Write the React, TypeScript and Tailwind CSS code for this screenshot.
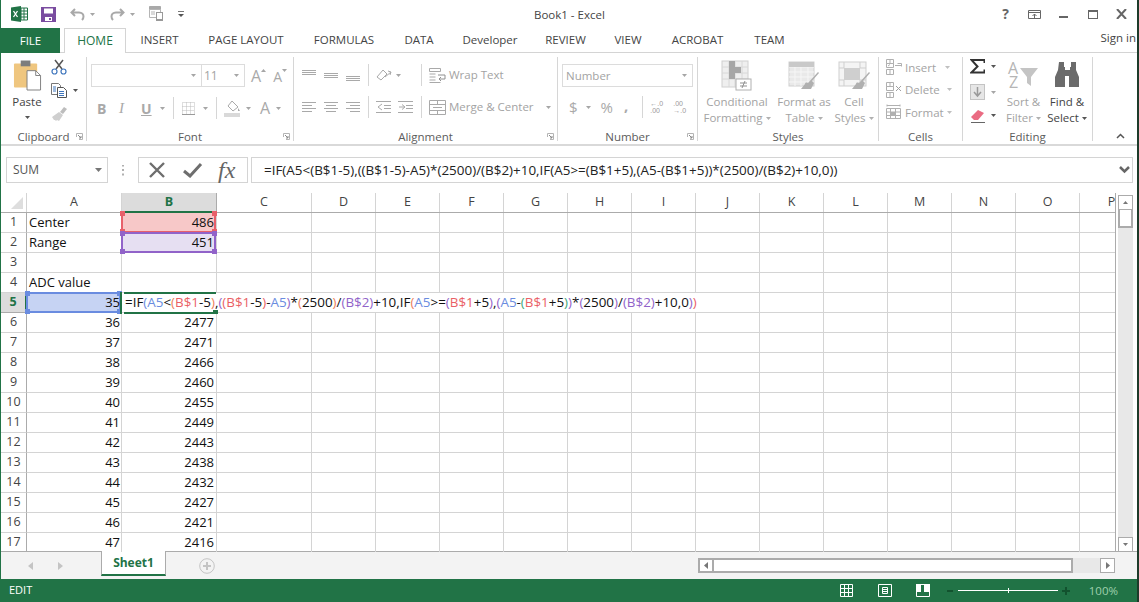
import React from "react";

const UI = "font-['Open_Sans','Noto_Sans',sans-serif]";
const Caret = ({ c = "#a6a6a6", cl = "" }: { c?: string; cl?: string }) => (
  <svg width="5" height="3" viewBox="0 0 5 3" className={"shrink-0 " + cl}><path d="M0 0h5L2.5 3z" fill={c} /></svg>
);
const Launcher = () => (
  <svg width="7" height="7" viewBox="0 0 7 7" className="absolute right-[3px] bottom-[1px]">
    <path d="M.5 4V.5h6M6.5 .5V6.5H3" fill="none" stroke="#b4b4b4" />
    <path d="M2 2l3 3M5 3v2H3" fill="none" stroke="#8a8a8a" />
  </svg>
);
const Group = ({ w, label, launcher, children }: { w: string; label?: string; launcher?: boolean; children: React.ReactNode }) => (
  <div className={w + " relative h-[84px] shrink-0 border-r border-[#d6d6d6] flex flex-col"}>
    <div className="h-[72px] shrink-0">{children}</div>
    <div className="flex-1 pt-[2px] flex items-center justify-center text-[11.5px] leading-none text-[#5c5c5c]">{label}</div>
    {launcher && <Launcher />}
  </div>
);
const Divider = ({ cl = "" }: { cl?: string }) => <div className={"w-px h-[22px] bg-[#d6d6d6] shrink-0 " + cl} />;

const Lines = ({ kind }: { kind: "top" | "mid" | "bot" | "l" | "c" | "r" }) => {
  const y = kind === "top" ? [1, 3, 5] : kind === "mid" ? [4, 6, 8] : kind === "bot" ? [7, 9, 11] : [1, 4, 7, 10];
  return (
    <svg width="14" height="12" viewBox="0 0 14 12" className="shrink-0">
      {y.map((v, i) => {
        const short = i % 2 === 1 && y.length === 4;
        const x1 = kind === "c" && short ? 2 : kind === "r" && short ? 4 : 0;
        const x2 = kind === "c" && short ? 12 : kind === "l" && short ? 10 : 14;
        return <path key={v} d={`M${x1} ${v}.5H${x2}`} stroke="#a9a9a9" />;
      })}
    </svg>
  );
};

const SmallCellIcon = ({ k }: { k: "ins" | "del" | "fmt" }) => (
  <svg width="17" height="16" viewBox="0 0 17 16" className="shrink-0" fill="none" stroke="#b0b0b0">
    {k === "fmt" ? (
      <>
        <path d="M1.500 4.500h14v10h-14zM1.500 8h14M1.500 11.500h14M5.500 4.500v10M10.500 4.500v10" />
        <path d="M2 1.500h13M2 .5v2M15 .5v2" />
        <path d="M6 8.500h4v3H6z" fill="#b0b0b0" />
      </>
    ) : (
      <>
        <path d="M1.500 .5h7v4h-7zM1.500 4.500h7v4h-7zM1.500 10.500h7v5h-7zM5 .5v4M5 10.500v5" />
        {k === "ins" ? <path d="M10 6.500h6.500M3 7l2-1.500M12.500 4.500h4v3" /> : <path d="M11 4l5 5M16 4l-5 5" stroke="#a0a0a0" />}
      </>
    )}
  </svg>
);

const StyleIcon = ({ k }: { k: "cond" | "table" | "cell" }) => (
  <svg width="32" height="32" viewBox="0 0 32 32" className="shrink-0">
    {k === "cond" && (
      <>
        <rect x="1" y="1" width="26" height="26" fill="#efefef" stroke="#d0d0d0" />
        <path d="M1 7h26M1 13h26M1 19h26M8 1v26M14 1v26M21 1v26" stroke="#d8d8d8" />
        <path d="M8 1h6v6h6v6h-6v6H8z" fill="#a6a6a6" />
        <rect x="15" y="19" width="15" height="11" fill="#fff" stroke="#b0b0b0" />
        <path d="M19 23h7M19 26h7M24 21l-3 7" stroke="#8f8f8f" fill="none" />
      </>
    )}
    {k === "table" && (
      <>
        <rect x="1" y="2" width="25" height="24" fill="#e9e9e9" stroke="#cfcfcf" />
        <path d="M1 7h25M1 12h25M1 17h25M1 22h25M7 2v24M13 2v24M20 2v24" stroke="#f6f6f6" />
        <path d="M1 2h25v5H1z" fill="#c9c9c9" />
        <path d="M30 12L20 23c-2-1-3 0-3 1l-4 5h10l3-6-2-2 7-8z" fill="#b0b0b0" />
      </>
    )}
    {k === "cell" && (
      <>
        <rect x="1" y="2" width="27" height="24" fill="#f4f4f4" stroke="#cfcfcf" />
        <path d="M1 8h5M1 20h5M22 8h6M22 20h6M6 2v6M22 2v6M6 20v6M22 20v6" stroke="#cfcfcf" />
        <rect x="6" y="8" width="16" height="12" fill="#cfcfcf" />
        <path d="M31 12L21 23c-2-1-3 0-3 1l-4 5h10l3-6-2-2 7-8z" fill="#b0b0b0" />
      </>
    )}
  </svg>
);

const LabeledBtn = ({ w, icon, l1, l2, caret, dark }: { w: string; icon: React.ReactNode; l1: string; l2: string; caret?: boolean; dark?: boolean }) => (
  <div className={w + " shrink-0 flex flex-col items-center pt-[3px] leading-none " + (dark ? "text-[#444]" : "text-[#a3a3a3]")}>
    <div className="h-[33px] flex items-start justify-center">{icon}</div>
    <div className="text-[11.5px] h-[16px] mt-[1px] whitespace-nowrap leading-[16px]">{l1}</div>
    <div className="text-[11.5px] h-[16px] whitespace-nowrap leading-[16px] flex items-center gap-[3px]">
      {l2}
      {caret && <Caret c={dark ? "#555" : "#b0b0b0"} />}
    </div>
  </div>
);

const CellRow = ({ k, t, gap }: { k: "ins" | "del" | "fmt"; t: string; gap: string }) => (
  <div className="h-[22.5px] flex items-center pl-[6px] text-[11.5px] text-[#a3a3a3]">
    <SmallCellIcon k={k} />
    <span className="ml-[3px]">{t}</span>
    <Caret c="#c0c0c0" cl={gap} />
  </div>
);

const Ribbon = () => (
  <div className="h-[93px] shrink-0 border-b-2 border-[#d9d9d9] flex items-start pt-[4px] bg-white">
    <Group w="w-[86px]" label="Clipboard" launcher>
      <div className="flex">
        <div className="w-[44px] pl-[8px] flex flex-col items-center text-[#444]">
          <svg width="29" height="31" viewBox="0 0 30 31" className="mt-[3px] shrink-0">
            <rect x="1" y="3" width="24" height="25" rx="1" fill="#efc67f" />
            <rect x="8" y="0" width="10" height="6" fill="#7d7d7d" />
            <path d="M14.500 10.500h9l5 5v15h-14z" fill="#fff" stroke="#7f7f7f" />
            <path d="M23.500 10.500v5h5" fill="none" stroke="#7f7f7f" />
          </svg>
          <div className="text-[11.5px] leading-[16px] mt-[3px] whitespace-nowrap">Paste</div>
          <Caret c="#555" cl="mt-[6px]" />
        </div>
        <div className="flex flex-col ml-[6px] pt-[2px]">
          <svg width="16" height="16" viewBox="0 0 16 16">
            <path d="M4 1l7 9M12 1L5 10" stroke="#555" strokeWidth="1.500" fill="none" />
            <circle cx="3.500" cy="12.500" r="2.500" fill="none" stroke="#3f76bd" strokeWidth="1.200" />
            <circle cx="12.500" cy="12.500" r="2.500" fill="none" stroke="#3f76bd" strokeWidth="1.200" />
          </svg>
          <div className="flex items-center mt-[8px]">
            <svg width="16" height="15" viewBox="0 0 16 15">
              <path d="M.5.5h7l2 2v9H.5z" fill="#fff" stroke="#777" />
              <path d="M6.500 4.500h6l3 3v7h-9z" fill="#fff" stroke="#555" />
              <path d="M8 8.500h5M8 10.500h5M8 12.500h5M2 4h3M2 6h3M2 8h3" stroke="#3f76bd" />
            </svg>
            <Caret c="#555" cl="ml-[6px]" />
          </div>
          <svg width="17" height="15" viewBox="0 0 17 15" className="mt-[8px]">
            <path d="M9 6l4-5 3 2-4 5z" fill="#bdbdbd" />
            <path d="M1 11l7-5 4 3-4 6-2-1-1 1-1-1-1 0z" fill="#cfcfcf" />
          </svg>
        </div>
      </div>
    </Group>

    <Group w="w-[207px]" label="Font" launcher>
      <div className="flex pl-[4px] mt-[7px] h-[23px]">
        <div className="w-[111px] h-[23px] border border-[#dcdcdc] flex items-center justify-end pr-[5px]"><Caret /></div>
        <div className="w-[43px] h-[23px] border border-l-0 border-[#dcdcdc] flex items-center justify-between pl-[2px] pr-[5px] text-[12px] text-[#a3a3a3]">11<Caret /></div>
        <div className="ml-[6px] flex items-end text-[#a9a9a9] text-[16px] leading-[21px]">A<Caret cl="rotate-180 mb-[15px]" /></div>
        <div className="ml-[7px] flex items-end text-[#a9a9a9] text-[14px] leading-[21px]">A<Caret cl="mb-[15px]" /></div>
      </div>
      <div className="flex items-center pl-[10px] mt-[11px] h-[20px] text-[#a9a9a9]">
        <span className="w-[22px] text-[14px] font-bold">B</span>
        <span className="w-[22px] text-[15px] italic font-['Liberation_Serif',serif]">I</span>
        <span className="w-[19px] text-[14px] underline font-bold">U</span>
        <Caret />
        <Divider cl="ml-[8px]" />
        <svg width="13" height="13" viewBox="0 0 13 13" className="ml-[8px]">
          <path d="M.5 .5h12v12H.5zM.5 4.500h12M.5 8.500h12M4.500 .5v12M8.500 .5v12" fill="none" stroke="#bdbdbd" strokeDasharray="1 1" />
          <path d="M0 12.500h13" stroke="#9a9a9a" />
        </svg>
        <Caret cl="ml-[8px]" />
        <Divider cl="ml-[8px]" />
        <svg width="17" height="17" viewBox="0 0 17 17" className="ml-[7px]">
          <path d="M8 1l6 6-5 4-5-5z" fill="#fff" stroke="#a9a9a9" />
          <path d="M14 8l2 3h-2z" fill="#a9a9a9" />
          <rect x="0" y="13" width="16" height="4" fill="#d9d9d9" />
        </svg>
        <Caret cl="ml-[5px]" />
        <span className="ml-[9px] text-[16px] leading-none">A</span>
        <Caret cl="ml-[6px]" />
      </div>
    </Group>

    <Group w="w-[264px]" label="Alignment" launcher>
      <div className="flex items-center pl-[8px] mt-[6px] h-[24px]">
        <Lines kind="top" />
        <span className="ml-[8px]"><Lines kind="mid" /></span>
        <span className="ml-[8px]"><Lines kind="bot" /></span>
        <Divider cl="ml-[8px]" />
        <svg width="17" height="14" viewBox="0 0 17 14" className="ml-[7px]">
          <path d="M1 9l6-7 4 4-6 6zM9 9l6-5M12 3l3 1-1 3" fill="none" stroke="#a9a9a9" />
        </svg>
        <Caret cl="ml-[3px]" />
        <Divider cl="ml-[20px]" />
        <svg width="17" height="15" viewBox="0 0 17 15" className="ml-[7px]">
          <path d="M.5.5h11v3H.5zM.5 6h6M.5 9h6M.5 12h6M.5 14.500h11" fill="none" stroke="#a9a9a9" />
          <path d="M9 7h7v4h-5M12 9l-2 2 2 2" fill="none" stroke="#909090" />
        </svg>
        <span className="ml-[3px] text-[11.5px] text-[#a3a3a3]">Wrap Text</span>
      </div>
      <div className="flex items-center pl-[8px] mt-[8px] h-[24px]">
        <Lines kind="l" />
        <span className="ml-[8px]"><Lines kind="c" /></span>
        <span className="ml-[8px]"><Lines kind="r" /></span>
        <Divider cl="ml-[8px]" />
        <svg width="15" height="12" viewBox="0 0 15 12" className="ml-[7px]">
          <path d="M0 .5h15M8 4.500h7M8 7.500h7M0 11.500h15M6 3L2 6l4 3" fill="none" stroke="#a9a9a9" />
        </svg>
        <svg width="15" height="12" viewBox="0 0 15 12" className="ml-[7px]">
          <path d="M0 .5h15M8 4.500h7M8 7.500h7M0 11.500h15M1 6h5M4 3.500L7 6 4 8.500" fill="none" stroke="#a9a9a9" />
        </svg>
        <Divider cl="ml-[8px]" />
        <svg width="17" height="15" viewBox="0 0 17 15" className="ml-[7px]">
          <path d="M.5.5h16v14H.5zM.5 4.500h16M.5 10.500h16M8.500 .5v4M8.500 10.500v4M4 7.500h9" fill="none" stroke="#a9a9a9" />
        </svg>
        <span className="ml-[3px] text-[11.5px] text-[#a3a3a3] whitespace-nowrap">Merge &amp; Center</span>
        <Caret cl="ml-[12px]" />
      </div>
    </Group>

    <Group w="w-[140px]" label="Number" launcher>
      <div className="ml-[4px] mt-[7px] w-[131px] h-[23px] border border-[#dcdcdc] flex items-center justify-between pl-[3px] pr-[5px] text-[11.5px] text-[#a3a3a3]">Number<Caret /></div>
      <div className="flex items-center pl-[11px] mt-[8px] h-[24px] text-[#a9a9a9]">
        <span className="text-[15px] leading-none">$</span>
        <Caret cl="ml-[8px]" />
        <span className="text-[15px] leading-none ml-[10px]">%</span>
        <span className="text-[15px] leading-none font-bold ml-[11px] mb-[3px]">,</span>
        <Divider cl="ml-[14px]" />
        <span className="ml-[7px] w-[17px] text-[7px] leading-[7px] text-[#999] font-['Liberation_Sans',sans-serif]">←.0<br />.00</span>
        <span className="ml-[6px] w-[17px] text-[7px] leading-[7px] text-[#999] font-['Liberation_Sans',sans-serif]">.00<br />→.0</span>
      </div>
    </Group>

    <Group w="w-[181px]" label="Styles">
      <div className="flex">
        <LabeledBtn w="w-[76px] ml-[1px]" icon={<StyleIcon k="cond" />} l1="Conditional" l2="Formatting" caret />
        <LabeledBtn w="w-[58px]" icon={<StyleIcon k="table" />} l1="Format as" l2="Table" caret />
        <LabeledBtn w="w-[42px]" icon={<StyleIcon k="cell" />} l1="Cell" l2="Styles" caret />
      </div>
    </Group>

    <Group w="w-[84px]" label="Cells">
      <div className="-mt-px">
        <CellRow k="ins" t="Insert" gap="ml-[9px]" />
        <CellRow k="del" t="Delete" gap="ml-[7px]" />
        <CellRow k="fmt" t="Format" gap="ml-[3px]" />
      </div>
    </Group>

    <Group w="w-[130px]" label="Editing">
      <div className="flex">
        <div className="flex flex-col pl-[7px] w-[40px]">
          <div className="flex items-center h-[23px] pb-[4px]">
            <svg width="15" height="15" viewBox="0 0 15 15"><path d="M14.500 4V1H1.500l6 6.500-6 6h13v-3" fill="none" stroke="#333" strokeWidth="2" /></svg>
            <Caret c="#555" cl="ml-[6px]" />
          </div>
          <div className="flex items-center h-[24px]">
            <svg width="15" height="16" viewBox="0 0 15 16"><rect x=".5" y=".5" width="14" height="15" fill="#e6e6e6" stroke="#c4c4c4" /><path d="M7.500 3v8M4 8l3.500 4L11 8" fill="none" stroke="#9a9a9a" strokeWidth="1.500" /></svg>
            <Caret cl="ml-[6px]" />
          </div>
          <div className="flex items-center h-[23px]">
            <svg width="16" height="14" viewBox="0 0 16 14"><path d="M1 8l7-7 6 3-6 7H4z" fill="#ea6b82" /><path d="M1 13.500h14" stroke="#666" /></svg>
            <Caret c="#555" cl="ml-[5px]" />
          </div>
        </div>
        <LabeledBtn w="w-[41px]" icon={
          <svg width="32" height="30" viewBox="0 0 32 30" className="-ml-px">
            <text x="1" y="14" fontSize="16" fill="#b5b5b5" fontFamily="Open Sans">A</text>
            <text x="2" y="28" fontSize="16" fill="#b5b5b5" fontFamily="Open Sans">Z</text>
            <path d="M13 8h18l-7 9v9l-4-3v-6z" fill="#c4c4c4" />
          </svg>} l1="Sort &amp;" l2="Filter" caret />
        <LabeledBtn w="w-[46px]" dark icon={
          <svg width="27" height="25" viewBox="0 0 27 25" className="mt-[2px]">
            <path d="M5 0h5v5h1v3h5V5h1V0h5v8l3 7v10h-10V14h-4v11H1V15l3-7z" fill="#6b6b6b" />
          </svg>} l1="Find &amp;" l2="Select" caret />
      </div>
    </Group>
    <div className="flex-1 h-[84px] flex items-end justify-end pr-[12px] pb-[2px]">
      <svg width="9" height="6" viewBox="0 0 9 6"><path d="M1 5l3.500-3.500L8 5" fill="none" stroke="#555" strokeWidth="1.500" /></svg>
    </div>
  </div>
);

const TABS: [string, string][] = [
  ["INSERT", "w-[67px]"], ["PAGE LAYOUT", "w-[106px]"], ["FORMULAS", "w-[90px]"], ["DATA", "w-[60px]"],
  ["Developer", "w-[82px]"], ["REVIEW", "w-[69px]"], ["VIEW", "w-[56px]"], ["ACROBAT", "w-[83px]"], ["TEAM", "w-[61px]"],
];

const TitleBar = () => (
  <div className="h-[28px] shrink-0 flex items-center relative">
    <div className="flex items-center pl-[10px]">
      <svg width="17" height="16" viewBox="0 0 17 16">
        <path d="M0 1.500L10 0v16L0 14.500z" fill="#217346" />
        <path d="M10 2h6.500v12H10z" fill="#fff" stroke="#217346" />
        <path d="M10 5h6M10 8h6M10 11h6M13 2v12" stroke="#217346" />
        <path d="M2.500 5l4 6M6.500 5l-4 6" stroke="#fff" strokeWidth="1.300" />
      </svg>
      <svg width="15" height="15" viewBox="0 0 15 15" className="ml-[13px]">
        <path d="M.5 .5h14v14H.5z" fill="#fff" stroke="#7a4ca0" />
        <path d="M0 0h15v15H0zM3 1.500v5h9v-5zM4 10v4h7v-4z" fill="#7a4ca0" fillRule="evenodd" />
        <rect x="8" y="11" width="2" height="2" fill="#7a4ca0" />
      </svg>
      <svg width="15" height="13" viewBox="0 0 15 13" className="ml-[14px]"><path d="M5 1L1.500 4.500 5 8M2 4.500h7c3 0 4.500 2 4.500 4 0 1.500-.5 2.500-1.500 3.500" fill="none" stroke="#a9a9a9" strokeWidth="2" /></svg>
      <Caret cl="ml-[5px]" />
      <svg width="15" height="13" viewBox="0 0 15 13" className="ml-[15px] -scale-x-100"><path d="M5 1L1.500 4.500 5 8M2 4.500h7c3 0 4.500 2 4.500 4 0 1.500-.5 2.500-1.500 3.500" fill="none" stroke="#a9a9a9" strokeWidth="2" /></svg>
      <Caret cl="ml-[5px]" />
      <svg width="16" height="16" viewBox="0 0 16 16" className="ml-[14px]">
        <path d="M.5 .5h11v3H.5z" fill="#a9a9a9" stroke="#a9a9a9" />
        <path d="M.5 3.500h11v8H.5z" fill="#fff" stroke="#b5b5b5" />
        <path d="M2 6h4M2 8h4" stroke="#b5b5b5" />
        <rect x="7.500" y="6.500" width="6" height="8" fill="#fff" stroke="#999" />
        <path d="M8 13h5v2H8z" fill="#999" />
      </svg>
      <svg width="6" height="6" viewBox="0 0 6 6" className="ml-[13px]"><path d="M0 .5h6" stroke="#777" /><path d="M0 3h6L3 6z" fill="#555" /></svg>
    </div>
    <div className="absolute left-[533px] top-[6px] text-[11.5px] leading-[18px] text-[#444] whitespace-nowrap">Book1 - Excel</div>
    <div className="ml-auto flex items-center pr-[10px] text-[#666]">
      <span className="font-bold text-[14px] leading-none">?</span>
      <svg width="13" height="9" viewBox="0 0 13 9" className="ml-[19px]"><path d="M.5 .5h12v8H.5zM.5 2.500h12M6.500 8V4M4.500 6l2-2 2 2" fill="none" stroke="#666" /></svg>
      <div className="w-[9px] h-[2px] bg-[#666] ml-[18px] mt-[5px]" />
      <div className="w-[10px] h-[9px] border border-t-2 border-[#666] ml-[20px]" />
      <svg width="11" height="10" viewBox="0 0 11 10" className="ml-[18px]"><path d="M1 0l9 10M10 0L1 10" stroke="#666" strokeWidth="2" /></svg>
    </div>
  </div>
);

const TabBar = () => (
  <div className="h-[25px] shrink-0 flex items-stretch relative border-b border-[#d4d4d4]">
    <div className="w-[59px] -mb-px bg-[#217346] text-white text-[11.5px] flex items-center justify-center">FILE</div>
    <div className="w-[62px] ml-[4px] -mb-px bg-white border border-b-0 border-[#d4d4d4] text-[#217346] text-[12px] flex items-center justify-center">HOME</div>
    {TABS.map(([t, w]) => (
      <div key={t} className={w + " shrink-0 flex items-center justify-center text-[11.5px] text-[#444] whitespace-nowrap"}>{t}</div>
    ))}
    <div className="ml-auto pr-[1px] text-[11.5px] text-[#444] leading-[20px] whitespace-nowrap">Sign in</div>
  </div>
);

const FormulaBar = () => (
  <div className="h-[26px] mt-[11px] shrink-0 flex items-stretch pl-[5px]">
    <div className="w-[102px] border border-[#d4d4d4] flex items-center justify-between pl-[6px] pr-[5px] text-[12px] text-[#555]">SUM<svg width="7" height="4" viewBox="0 0 7 4"><path d="M0 0h7L3.500 4z" fill="#777" /></svg></div>
    <div className="w-[30px] flex items-center justify-center"><svg width="2" height="11" viewBox="0 0 2 11"><path d="M0 .5h2M0 5h2M0 9.500h2" stroke="#b0b0b0" strokeWidth="2" /></svg></div>
    <div className="w-[110px] border border-[#d4d4d4] flex items-center pl-[10px]">
      <svg width="16" height="16" viewBox="0 0 16 16"><path d="M1 1l14 14M15 1L1 15" stroke="#6e6e6e" strokeWidth="2.400" /></svg>
      <svg width="20" height="16" viewBox="0 0 20 16" className="ml-[18px]"><path d="M1 9l6 5L18 2" fill="none" stroke="#6e6e6e" strokeWidth="3" /></svg>
      <span className="ml-[15px] w-[22px] text-[24px] leading-none italic text-[#666] font-['Liberation_Serif',serif]">fx</span>
    </div>
    <div className="w-[882px] ml-[3px] border border-[#d4d4d4] flex items-center justify-between pl-[12px] pr-[2px] text-[#222] text-[13.45px] font-['Open_Sans',sans-serif] whitespace-nowrap">
      <span>=IF(A5&lt;(B$1-5),((B$1-5)-A5)*(2500)/(B$2)+10,IF(A5&gt;=(B$1+5),(A5-(B$1+5))*(2500)/(B$2)+10,0))</span>
      <svg width="11" height="8" viewBox="0 0 11 8"><path d="M1 1l4.500 4.500L10 1" fill="none" stroke="#666" strokeWidth="2.500" /></svg>
    </div>
  </div>
);

const COLS: [string, string][] = [
  ["A", "w-[95px]"], ["B", "w-[95px]"], ["C", "w-[95px]"], ["D", "w-[64px]"], ["E", "w-[64px]"], ["F", "w-[64px]"], ["G", "w-[64px]"],
  ["H", "w-[64px]"], ["I", "w-[64px]"], ["J", "w-[64px]"], ["K", "w-[64px]"], ["L", "w-[64px]"], ["M", "w-[64px]"], ["N", "w-[64px]"], ["O", "w-[64px]"], ["P", "w-[64px]"],
];
const B_VALS = ["486", "451", "", "", "", "2477", "2471", "2466", "2460", "2455", "2449", "2443", "2438", "2432", "2427", "2421", "2416"];
const A_LEFT: Record<number, string> = { 1: "Center", 2: "Range", 4: "ADC value" };

const BL = "#6a8ce0", RD = "#ea5f66", PU = "#9163c9", OR = "#ed7d5a", GR = "#3fa877", K = "#111";
const F: [string, string][] = [
  ["=IF", K], ["(", BL], ["A5", BL], ["<", K], ["(", OR], ["B$1", RD], ["-5", K], [")", OR], [",", K], ["(", PU], ["(", RD], ["B$1", RD], ["-5", K], [")", RD], ["-", K], ["A5", BL], [")", PU], ["*", K], ["(", OR], ["2500", K], [")", OR], ["/", K], ["(", PU], ["B$2", PU], [")", PU],
  ["+10,IF", K], ["(", OR], ["A5", BL], [">=", K], ["(", PU], ["B$1", RD], ["+5", K], [")", PU], [",", K], ["(", PU], ["A5", BL], ["-", K], ["(", GR], ["B$1", RD], ["+5", K], [")", GR], [")", PU], ["*", K], ["(", PU], ["2500", K], [")", PU], ["/", K], ["(", PU], ["B$2", PU], [")", PU], ["+10,0", K], [")", PU], [")", RD],
];

const Ref = ({ color, cl, noTop }: { color: string; cl: string; noTop?: boolean }) => (
  <div className={"absolute pointer-events-none z-10 " + cl}>
    <div className={"absolute inset-0 border-2 " + (noTop ? "border-t-0" : "")} style={{ borderColor: color }} />
    {["-top-[1px] -left-[1px]", "-top-[1px] -right-[1px]", "-bottom-[1px] -left-[1px]", "-bottom-[1px] -right-[1px]"].map((p) => (
      <div key={p} className={"absolute w-[5px] h-[5px] " + p} style={{ background: color }} />
    ))}
  </div>
);

const Grid = () => (
  <div className="h-[359px] mt-[10px] shrink-0 flex items-stretch overflow-hidden">
    <div className="w-[1114px] shrink-0 overflow-hidden text-[13px] font-['Open_Sans',sans-serif] text-[#111]">
      <div className="flex h-[20px] border-b border-[#ababab] text-[#444] text-[12.5px]">
        <div className="w-[26px] h-[19px] shrink-0 border-r border-[#d4d4d4] flex items-end justify-end">
          <svg width="12" height="12" viewBox="0 0 12 12" className="mr-[3px] mb-[3px]"><path d="M12 0v12H0z" fill="#dedede" /></svg>
        </div>
        {COLS.map(([c, w], i) => (
          <div key={c} className={w + " h-[19px] shrink-0 flex items-center justify-center border-r " + (i === 1 ? "bg-[#dcdcdc] border-[#ababab] font-bold text-[#217346] border-b-2 border-b-[#217346] !h-[20px]" : "border-[#d4d4d4]")}>{c}</div>
        ))}
      </div>
      {B_VALS.map((b, r) => {
        const row = r + 1;
        return (
          <div key={row} className="flex h-[20px]">
            <div className={"w-[26px] shrink-0 border-b border-r flex items-center justify-center text-[12.5px] " + (row === 5 ? "bg-[#dcdcdc] text-[#217346] font-bold border-r-2 border-r-[#217346] border-b-[#ababab]" : "border-[#ababab] border-b-[#d4d4d4] text-[#444]")}>{row}</div>
            {COLS.map(([c, w], i) => (
              <div key={c} className={w + " relative shrink-0 border-b border-r border-[#d4d4d4] leading-[19px] whitespace-nowrap"}>
                {i === 0 && A_LEFT[row] && <div className="pl-[2px]">{A_LEFT[row]}</div>}
                {i === 0 && row >= 5 && (
                  <div className={"text-right pr-[1px] " + (row === 5 ? "relative z-20" : "")}>{row + 30}</div>
                )}
                {i === 0 && row === 5 && (
                  <>
                    <div className="absolute inset-0 bg-[#c6d3f3]" />
                    <Ref color="#6a8ce0" cl="-left-[1px] -top-[1px] -right-[0px] -bottom-[1px]" />
                  </>
                )}
                {i === 1 && row === 1 && (
                  <>
                    <div className="absolute inset-0 bg-[#f7c8c8]" />
                    <Ref color="#e8606a" noTop cl="-left-[1px] -top-[1px] right-0 -bottom-[1px]" />
                  </>
                )}
                {i === 1 && row === 2 && (
                  <>
                    <div className="absolute inset-0 bg-[#e6dff2]" />
                    <Ref color="#9163c9" cl="-left-[1px] -top-[1px] right-0 -bottom-[1px]" />
                  </>
                )}
                {i === 1 && b && <div className="relative z-20 text-right pr-[2px]">{b}</div>}
                {i === 1 && row === 5 && (
                  <>
                    <div className="absolute z-30 left-[2px] top-0 h-[19px] bg-white pl-px pr-[2px] text-[13.4px] text-[#111] leading-[19px]">
                      {F.map(([t, col], k) => <span key={k} style={{ color: col }}>{t}</span>)}
                    </div>
                    <div className="absolute z-40 -left-[2px] -top-[1px] w-[2px] h-[22px] bg-[#217346]" />
                    <div className="absolute z-40 left-[2px] -top-[1px] right-0 h-[2px] bg-[#217346]" />
                    <div className="absolute z-40 left-[2px] -bottom-[2px] right-0 h-[2px] bg-[#217346]" />
                    <div className="absolute z-40 -right-[2px] -bottom-[2px] w-[5px] h-[4px] bg-[#217346]" />
                  </>
                )}
              </div>
            ))}
          </div>
        );
      })}
    </div>
    <div className="border-l border-[#ababab] h-[359px] shrink-0" />
    <div className="flex-1 flex flex-col items-center pl-[2px] pr-[4px] pt-[2px] bg-white">
      <div className="w-[15px] h-[15px] border border-[#ababab] flex items-center justify-center"><Caret c="#777" cl="rotate-180" /></div>
      <div className="w-[15px] h-[18px] border-2 border-t-0 border-[#ababab] bg-white" />
      <div className="w-[15px] flex-1 bg-[#e8e8e8]" />
      <div className="w-[15px] h-[15px] border border-[#ababab] bg-white flex items-center justify-center"><Caret c="#777" /></div>
    </div>
  </div>
);

const SheetBar = () => (
  <div className="h-[28px] shrink-0 bg-[#f3f3f3] border-t border-[#ababab] flex items-start -mt-px">
    <svg width="5" height="8" viewBox="0 0 5 8" className="ml-[27px] mt-[10px]"><path d="M5 0v8L0 4z" fill="#c4c4c4" /></svg>
    <svg width="5" height="8" viewBox="0 0 5 8" className="ml-[25px] mt-[10px]"><path d="M0 0v8l5-4z" fill="#c4c4c4" /></svg>
    <div className="ml-[38px] -mt-px w-[65px] h-[25px] bg-white border border-t-0 border-[#ababab] border-b-2 border-b-[#217346] flex items-center justify-center text-[#217346] font-bold text-[12px]">Sheet1</div>
    <svg width="16" height="16" viewBox="0 0 16 16" className="ml-[33px] mt-[6px]"><circle cx="8" cy="8" r="7.300" fill="none" stroke="#c4c4c4" /><path d="M8 4v8M4 8h8" stroke="#c4c4c4" strokeWidth="2" /></svg>
    <div className="ml-[483px] mt-[6px] flex h-[15px]">
      <div className="w-[14px] border-2 border-r-0 border-[#ababab] bg-white flex items-center justify-center"><svg width="4" height="7" viewBox="0 0 4 7"><path d="M4 0v7L0 3.500z" fill="#777" /></svg></div>
      <div className="w-[361px] border-2 border-[#ababab] bg-white" />
      <div className="w-[27px] bg-[#e8e8e8]" />
      <div className="w-[15px] border border-[#ababab] bg-white flex items-center justify-center"><svg width="4" height="7" viewBox="0 0 4 7"><path d="M0 0v7l4-3.500z" fill="#777" /></svg></div>
    </div>
  </div>
);

const StatusBar = () => (
  <div className="h-[23px] shrink-0 -ml-px bg-[#217346] flex items-center text-white text-[11px] pl-[9px]">
    <span>EDIT</span>
    <div className="ml-auto flex items-center pr-[19px]">
      <svg width="13" height="13" viewBox="0 0 13 13"><path d="M.5 .5h12v12H.5zM.5 4.500h12M.5 8.500h12M4.500 .5v12M8.500 .5v12" fill="none" stroke="#fff" /></svg>
      <svg width="14" height="13" viewBox="0 0 14 13" className="ml-[25px]"><path d="M.5 .5h13v12H.5zM4.500 3.500h5v6h-5zM5 5.500h4M5 7.500h4" fill="none" stroke="#fff" /></svg>
      <svg width="14" height="13" viewBox="0 0 14 13" className="ml-[24px]"><path d="M.5 .5h13v12H.5z" fill="none" stroke="#fff" /><path d="M0 0h5v8H0zM8 0h6v8H8z" fill="#fff" /></svg>
      <div className="w-[6px] h-[2px] bg-[#12522e] ml-[17px]" />
      <div className="relative w-[100px] h-px bg-white ml-[5px]"><div className="absolute left-[50px] -top-[2px] w-px h-[5px] bg-white" /></div>
      <svg width="8" height="8" viewBox="0 0 8 8" className="ml-[4px]"><path d="M4 0v8M0 4h8" stroke="#12522e" strokeWidth="2" /></svg>
      <span className="ml-[19px] text-[11.5px] text-[#9fd0ad]">100%</span>
    </div>
  </div>
);

export default function App() {
  return (
    <div className={"w-[1139px] h-[602px] overflow-hidden bg-white flex flex-col border-l border-[#217346] border-r-2 border-r-[#1d3b2a] " + UI}>
      <TitleBar />
      <TabBar />
      <Ribbon />
      <FormulaBar />
      <Grid />
      <SheetBar />
      <StatusBar />
    </div>
  );
}
